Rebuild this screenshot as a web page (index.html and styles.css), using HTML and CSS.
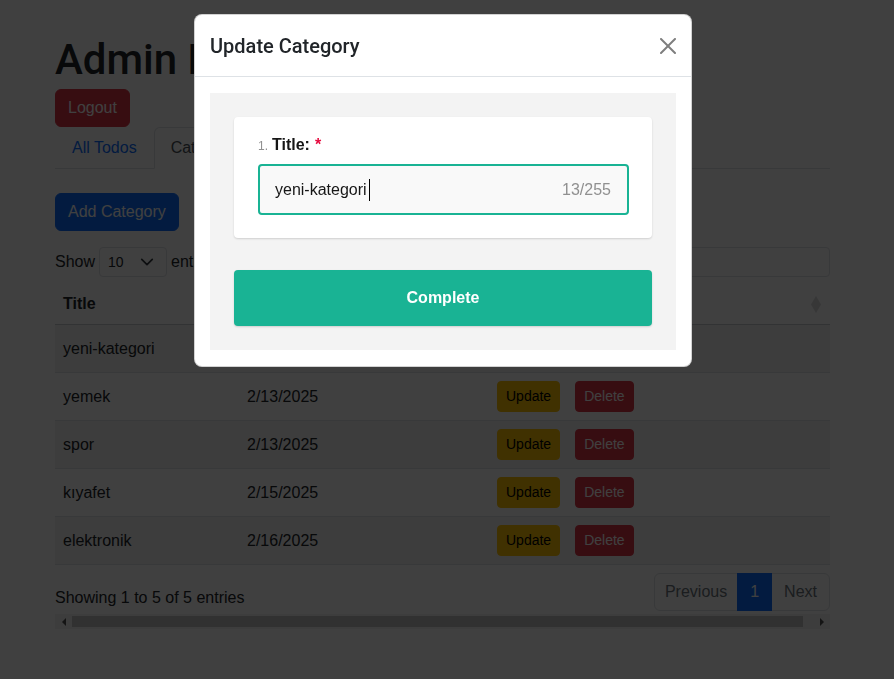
FILE: index.html
```html
<!DOCTYPE html>
<html lang="en">
<head>
<meta charset="utf-8">
<title>Admin Panel</title>
<link rel="stylesheet" href="styles.css">
</head>
<body>
<div class="page">
  <h1 class="page-title">Admin Panel</h1>
  <div class="logout-row"><button class="btn btn-danger">Logout</button></div>
  <ul class="tabs">
    <li><a class="tab" href="#">All Todos</a></li>
    <li><a class="tab active" href="#">Categories</a></li>
  </ul>
  <div class="tab-content">
    <div class="add-row"><button class="btn btn-primary">Add Category</button></div>
    <div class="dt-scroll">
      <div class="dt-top">
        <div class="dt-length">
          <span>Show</span>
          <div class="select"><span>10</span><svg class="chev" viewBox="0 0 16 16" width="16" height="16"><path d="m2 5 6 6 6-6" fill="none" stroke="#343a40" stroke-width="2" stroke-linecap="round" stroke-linejoin="round"/></svg></div>
          <span>entries</span>
        </div>
        <div class="dt-search">
          <span>Search:</span>
          <div class="search-input"></div>
        </div>
      </div>
      <table class="dt-table">
        <colgroup><col class="c1"><col class="c2"><col class="c3"></colgroup>
        <thead>
          <tr>
            <th><div class="th-inner"><span>Title</span><svg class="sort" viewBox="0 0 10 17" width="10" height="17"><path d="M5 0 10 8.5 5 17 0 8.5z"/></svg></div></th>
            <th><div class="th-inner"><span>Created At</span><svg class="sort" viewBox="0 0 10 17" width="10" height="17"><path d="M5 0 10 8.5 5 17 0 8.5z"/></svg></div></th>
            <th><div class="th-inner"><span>Actions</span><svg class="sort" viewBox="0 0 10 17" width="10" height="17"><path d="M5 0 10 8.5 5 17 0 8.5z"/></svg></div></th>
          </tr>
        </thead>
        <tbody>
          <tr><td>yeni-kategori</td><td>2/17/2025</td><td><button class="btn btn-sm btn-warning">Update</button><button class="btn btn-sm btn-danger del">Delete</button></td></tr>
          <tr><td>yemek</td><td>2/13/2025</td><td><button class="btn btn-sm btn-warning">Update</button><button class="btn btn-sm btn-danger del">Delete</button></td></tr>
          <tr><td>spor</td><td>2/13/2025</td><td><button class="btn btn-sm btn-warning">Update</button><button class="btn btn-sm btn-danger del">Delete</button></td></tr>
          <tr><td>kıyafet</td><td>2/15/2025</td><td><button class="btn btn-sm btn-warning">Update</button><button class="btn btn-sm btn-danger del">Delete</button></td></tr>
          <tr><td>elektronik</td><td>2/16/2025</td><td><button class="btn btn-sm btn-warning">Update</button><button class="btn btn-sm btn-danger del">Delete</button></td></tr>
        </tbody>
      </table>
      <div class="dt-bottom">
        <div class="dt-info">Showing 1 to 5 of 5 entries</div>
        <ul class="pagination">
          <li class="page-link disabled first">Previous</li>
          <li class="page-link active">1</li>
          <li class="page-link disabled last">Next</li>
        </ul>
      </div>
      <div class="scrollbar">
        <div class="sb-btn"><span class="tri tri-left"></span></div>
        <div class="sb-thumb"></div>
        <div class="sb-gap"></div>
        <div class="sb-btn"><span class="tri tri-right"></span></div>
      </div>
    </div>
  </div>
</div>

<div class="backdrop"></div>

<div class="modal">
  <div class="dialog">
    <div class="modal-header">
      <h5 class="modal-title">Update Category</h5>
      <svg class="close" viewBox="0 0 16 16" width="16" height="16"><path d="M.293.293a1 1 0 0 1 1.414 0L8 6.586 14.293.293a1 1 0 1 1 1.414 1.414L9.414 8l6.293 6.293a1 1 0 0 1-1.414 1.414L8 9.414l-6.293 6.293a1 1 0 0 1-1.414-1.414L6.586 8 .293 1.707a1 1 0 0 1 0-1.414z"/></svg>
    </div>
    <div class="modal-body">
      <div class="sv">
        <div class="sv-card">
          <div class="sv-title"><span class="sv-num">1.</span><span>Title:</span><span class="sv-req">*</span></div>
          <div class="sv-input"><span class="sv-value">yeni-kategori</span><span class="caret"></span><span class="sv-count">13/255</span></div>
        </div>
        <div class="sv-complete">Complete</div>
      </div>
    </div>
  </div>
</div>
</body>
</html>
```
FILE: styles.css
```css
* { box-sizing: border-box; }
html, body { margin: 0; padding: 0; }
body {
  width: 894px;
  height: 679px;
  overflow: hidden;
  background: #fff;
  color: #212529;
  font-family: "Liberation Sans", Arial, sans-serif;
  font-size: 16px;
  line-height: 1.5;
}

.page { padding: 35px 64px 0 55px; }
.page-title {
  margin: 0 0 4px;
  font-family: Roboto, "Liberation Sans", sans-serif;
  font-size: 42px;
  font-weight: 500;
  line-height: 1.2;
}

.btn {
  display: inline-block;
  font-family: inherit;
  font-size: 16px;
  line-height: 24px;
  padding: 6px 12px;
  border: 1px solid transparent;
  border-radius: 6px;
  cursor: pointer;
}
.btn-danger { background: #dc3545; border-color: #dc3545; color: #fff; }
.btn-primary { background: #0d6efd; border-color: #0d6efd; color: #fff; }
.btn-warning { background: #ffc107; border-color: #ffc107; color: #000; }
.btn-sm { padding: 4px 8px; font-size: 14px; line-height: 21px; border-radius: 4px; }
.del { margin-left: 15px; }

.logout-row, .add-row { display: flex; }

.tabs { display: flex; list-style: none; margin: 0; padding: 0; border-bottom: 1px solid #dee2e6; }
.tab {
  display: block;
  padding: 8px 16px;
  margin-bottom: -1px;
  border: 1px solid transparent;
  border-radius: 6px 6px 0 0;
  color: #0d6efd;
  text-decoration: none;
}
.tab.active { color: #495057; background: #fff; border-color: #dee2e6 #dee2e6 #fff; }

.tab-content { padding-top: 24px; }
.add-row { margin-bottom: 16px; }

.dt-top { display: flex; justify-content: space-between; align-items: center; height: 30px; }
.dt-length, .dt-search { display: flex; align-items: center; gap: 4px; }
.select {
  width: 68px;
  height: 30px;
  display: flex;
  align-items: center;
  justify-content: space-between;
  padding: 0 12px 0 8px;
  border: 1px solid #dee2e6;
  border-radius: 4px;
  font-size: 14px;
}
.chev { width: 14px; height: 14px; }
.search-input { width: 150px; height: 30px; margin-left: 4px; border: 1px solid #dee2e6; border-radius: 4px; }

.dt-table { width: 100%; border-collapse: collapse; margin: 7px 0 6px; table-layout: fixed; }
.c1 { width: 184px; }
.c2 { width: 250px; }
.dt-table th {
  text-align: left;
  font-weight: 700;
  padding: 8px 9px 8px 8px;
  border-bottom: 1px solid #c8cbce;
}
.th-inner { display: flex; justify-content: space-between; align-items: center; }
.sort { fill: #212529; opacity: 0.16; width: 10px; height: 17px; }
.dt-table td { padding: 8px; border-bottom: 1px solid #dee2e6; vertical-align: middle; }
.dt-table tbody tr:nth-child(odd) td { background: rgba(0, 0, 0, 0.05); }

.dt-bottom { display: flex; justify-content: space-between; align-items: flex-start; }
.dt-info { padding-top: 15px; }
.pagination { display: flex; list-style: none; margin: 2px 0; padding: 0; }
.page-link {
  padding: 6px 12px;
  border: 1px solid #dee2e6;
  background: #fff;
  color: #0d6efd;
  line-height: 24px;
}
.page-link + .page-link { margin-left: -1px; }
.page-link.disabled { color: #6c757d; }
.page-link.active { background: #0d6efd; border-color: #0d6efd; color: #fff; position: relative; }
.page-link.first { border-radius: 6px 0 0 6px; padding: 6px 10px; }
.page-link.last { border-radius: 0 6px 6px 0; }

.scrollbar { display: flex; height: 15px; margin-top: 1px; background: #f1f1f1; }
.sb-btn { width: 17px; display: flex; align-items: center; justify-content: center; }
.sb-thumb { flex: 1; margin: 2px 0; background: #c1c1c1; }
.sb-gap { width: 10px; }
.tri { width: 0; height: 0; border-top: 4px solid transparent; border-bottom: 4px solid transparent; }
.tri-left { border-right: 4px solid #505050; }
.tri-right { border-left: 4px solid #505050; }

.backdrop { position: fixed; inset: 0; background: rgba(0, 0, 0, 0.75); }

.modal { position: fixed; inset: 0; }
.dialog {
  margin: 14px 0 0 194px;
  width: 498px;
  background: #fff;
  border: 1px solid rgba(0, 0, 0, 0.175);
  border-radius: 8px;
}
.modal-header {
  display: flex;
  justify-content: space-between;
  align-items: center;
  padding: 16px 15px 15px 15px;
  border-bottom: 1px solid #dee2e6;
}
.modal-title {
  margin: 0;
  font-family: Roboto, "Liberation Sans", sans-serif;
  font-size: 20px;
  font-weight: 500;
  line-height: 30px;
  color: #212529;
}
.close { fill: #000; opacity: 0.5; }
.modal-body { padding: 16px 15px; }

.sv { background: #f3f3f3; padding: 24px; }
.sv-card {
  background: #fff;
  border-radius: 4px;
  box-shadow: 0 1px 2px rgba(0, 0, 0, 0.15);
  padding: 16px 23px 23px 24px;
}
.sv-title { display: flex; align-items: baseline; font-weight: 700; line-height: 24px; margin-bottom: 6px; color: #161616; }
.sv-num { font-size: 12px; font-weight: 400; color: #909090; margin-right: 4px; }
.sv-req { color: #e60a3e; margin-left: 5px; }
.sv-input {
  display: flex;
  align-items: center;
  height: 51px;
  padding: 0 16px 0 15px;
  background: #f9f9f9;
  border: 2px solid #19b394;
  border-radius: 4px;
  color: #161616;
}
.caret { width: 1px; height: 22px; background: #000; margin-left: 2px; }
.sv-count { margin-left: auto; color: #909090; }
.sv-complete {
  margin-top: 32px;
  height: 56px;
  line-height: 56px;
  text-align: center;
  background: #19b394;
  color: #fff;
  font-weight: 700;
  border-radius: 4px;
  box-shadow: 0 1px 2px rgba(0, 0, 0, 0.15);
}
```
